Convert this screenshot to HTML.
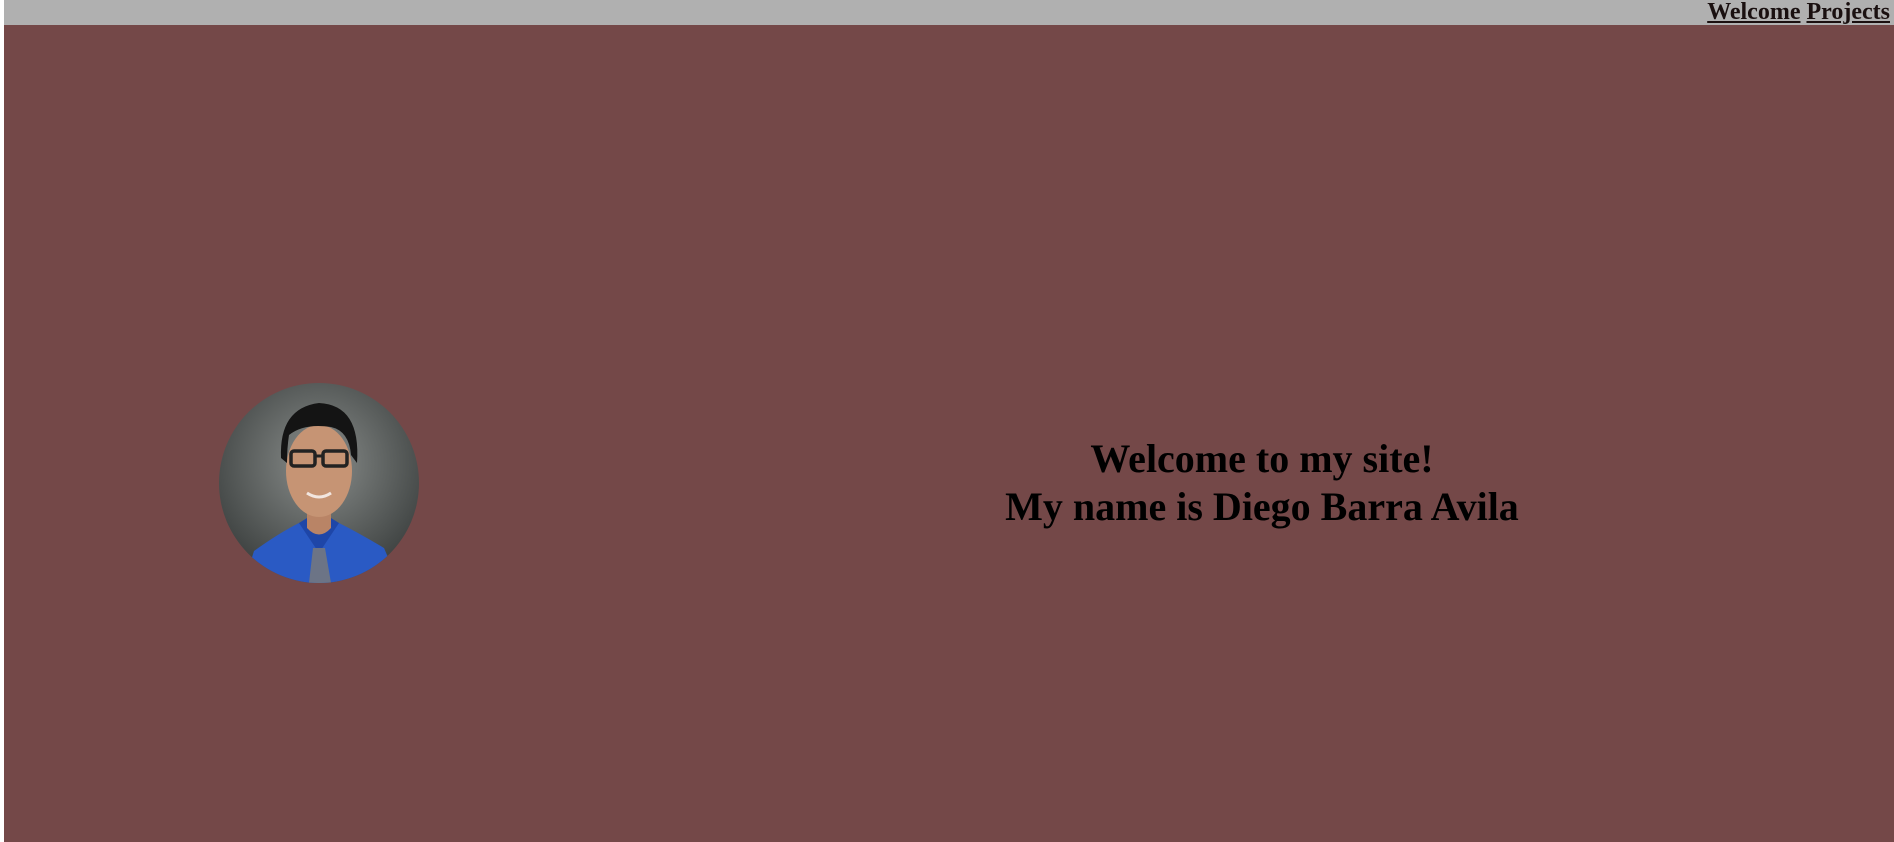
<!DOCTYPE html>
<html><head><style>
html,body{margin:0;padding:0;width:1894px;height:842px;overflow:hidden;background:#fff;font-family:"Liberation Serif",serif}
#bar{position:absolute;left:4px;top:0;width:1890px;height:25px;background:#b0b0b0}
#nav{position:absolute;right:4px;top:0;font-weight:bold;font-size:24px;line-height:25px;white-space:nowrap}
#nav a{text-decoration:underline;color:#1a1010}
#main{position:absolute;left:4px;top:25px;width:1890px;height:817px;background:#744848}
#t{position:absolute;left:900px;width:724px;top:435px;text-align:center;font-weight:bold;font-size:40px;line-height:48px;color:#000}
#p{position:absolute;left:219px;top:383px}
</style></head><body>
<div id="bar"><div id="nav"><a>Welcome</a> <a>Projects</a></div></div>
<div id="main"></div>
<div id="t">Welcome to my site!<br>My name is Diego Barra Avila</div>
<svg id="p" width="200" height="200" viewBox="0 0 200 200">
<defs><radialGradient id="g" cx="0.5" cy="0.4" r="0.6"><stop offset="0" stop-color="#8a8e8c"/><stop offset="1" stop-color="#3e4241"/></radialGradient>
<clipPath id="c"><circle cx="100" cy="100" r="100"/></clipPath></defs>
<g clip-path="url(#c)">
<rect width="200" height="200" fill="url(#g)"/>
<path d="M25 200 L35 168 Q60 150 80 140 L120 140 Q140 150 165 165 L180 200Z" fill="#2a5ac4"/>
<path d="M80 140 L100 170 L120 140 L112 135 L100 150 L88 135Z" fill="#1e46a8"/>
<path d="M94 165 L106 165 L112 200 L90 200Z" fill="#6c7486"/>
<path d="M88 130 L88 145 Q100 158 112 145 L112 130Z" fill="#b98466"/>
<ellipse cx="100" cy="88" rx="33" ry="46" fill="#c69474"/>
<path d="M62 75 Q60 25 100 20 Q142 22 138 80 L132 72 Q130 48 112 44 Q85 40 70 52 Q68 65 68 80Z" fill="#141414"/>
<rect x="72" y="68" width="24" height="15" rx="3" fill="none" stroke="#222" stroke-width="3.5"/>
<rect x="104" y="68" width="24" height="15" rx="3" fill="none" stroke="#222" stroke-width="3.5"/>
<path d="M96 73 L104 73" stroke="#222" stroke-width="3"/>
<path d="M88 110 Q100 118 112 110" stroke="#f2e6e0" stroke-width="3" fill="none"/>
</g></svg>
</body></html>
